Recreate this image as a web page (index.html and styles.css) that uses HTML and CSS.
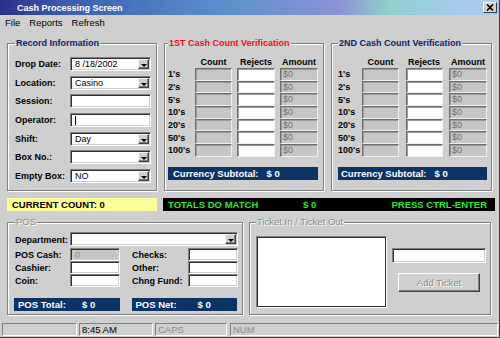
FILE: index.html
```html
<!DOCTYPE html>
<html lang="en">
<head>
    <meta charset="UTF-8">
    <title>Cash Processing Screen</title>
    <link rel="stylesheet" href="styles.css">
</head>
<body>
    <div class="window">
        <div class="titlebar">
            <span class="title">Cash Processing Screen</span>
            <span class="close-btn">
                <svg width="8" height="7" viewBox="0 0 8 7"><path d="M1 0.5 L7 6.5 M7 0.5 L1 6.5" stroke="#000" stroke-width="1.6"/></svg>
            </span>
        </div>

        <div class="menubar">
            <span>File</span>
            <span>Reports</span>
            <span>Refresh</span>
        </div>

        <div class="top-row">
            <fieldset class="group record">
                <legend>Record Information</legend>
                <div class="form-grid">
                    <label>Drop Date:</label>
                    <div class="field combo"><span>8 /18/2002</span><i class="drop"></i></div>
                    <label>Location:</label>
                    <div class="field combo"><span>Casino</span><i class="drop"></i></div>
                    <label>Session:</label>
                    <div class="field"></div>
                    <label>Operator:</label>
                    <div class="field"><i class="caret"></i></div>
                    <label>Shift:</label>
                    <div class="field combo"><span>Day</span><i class="drop"></i></div>
                    <label>Box No.:</label>
                    <div class="field combo"><span></span><i class="drop"></i></div>
                    <label>Empty Box:</label>
                    <div class="field combo"><span>NO</span><i class="drop"></i></div>
                </div>
            </fieldset>

            <fieldset class="group count first">
                <legend class="red">1ST Cash Count Verification</legend>
                <div class="count-grid">
                    <span></span><span class="head">Count</span><span class="head">Rejects</span><span class="head">Amount</span>
                    <span class="denom">1's</span><span class="cell"></span><span class="cell white"></span><span class="cell">$0</span>
                    <span class="denom">2's</span><span class="cell"></span><span class="cell white"></span><span class="cell">$0</span>
                    <span class="denom">5's</span><span class="cell"></span><span class="cell white"></span><span class="cell">$0</span>
                    <span class="denom">10's</span><span class="cell"></span><span class="cell white"></span><span class="cell">$0</span>
                    <span class="denom">20's</span><span class="cell"></span><span class="cell white"></span><span class="cell">$0</span>
                    <span class="denom">50's</span><span class="cell"></span><span class="cell white"></span><span class="cell">$0</span>
                    <span class="denom">100's</span><span class="cell"></span><span class="cell white"></span><span class="cell">$0</span>
                </div>
                <div class="navy-bar subtotal">Currency Subtotal: <span class="amt">$ 0</span></div>
            </fieldset>

            <fieldset class="group count second">
                <legend>2ND Cash Count Verification</legend>
                <div class="count-grid">
                    <span></span><span class="head">Count</span><span class="head">Rejects</span><span class="head">Amount</span>
                    <span class="denom">1's</span><span class="cell"></span><span class="cell white"></span><span class="cell">$0</span>
                    <span class="denom">2's</span><span class="cell"></span><span class="cell white"></span><span class="cell">$0</span>
                    <span class="denom">5's</span><span class="cell"></span><span class="cell white"></span><span class="cell">$0</span>
                    <span class="denom">10's</span><span class="cell"></span><span class="cell white"></span><span class="cell">$0</span>
                    <span class="denom">20's</span><span class="cell"></span><span class="cell white"></span><span class="cell">$0</span>
                    <span class="denom">50's</span><span class="cell"></span><span class="cell white"></span><span class="cell">$0</span>
                    <span class="denom">100's</span><span class="cell"></span><span class="cell white"></span><span class="cell">$0</span>
                </div>
                <div class="navy-bar subtotal">Currency Subtotal: <span class="amt">$ 0</span></div>
            </fieldset>
        </div>

        <div class="status-row">
            <div class="current-count">CURRENT COUNT: 0</div>
            <div class="totals">
                <span class="totals-msg">TOTALS DO MATCH</span>
                <span>$ 0</span>
                <span class="hint">PRESS CTRL-ENTER</span>
            </div>
        </div>

        <div class="bottom-row">
            <fieldset class="group pos">
                <legend class="disabled">POS</legend>
                <div class="pos-grid">
                    <label>Department:</label>
                    <div class="field combo dept"><span></span><i class="drop"></i></div>
                    <label>POS Cash:</label>
                    <div class="field gray"><span class="dim">0</span></div>
                    <label class="right-label">Checks:</label>
                    <div class="field"></div>
                    <label>Cashier:</label>
                    <div class="field"></div>
                    <label class="right-label">Other:</label>
                    <div class="field"></div>
                    <label>Coin:</label>
                    <div class="field"></div>
                    <label class="right-label">Chng Fund:</label>
                    <div class="field"></div>
                </div>
                <div class="pos-totals">
                    <div class="navy-bar pos-bar"><span class="pos-label">POS Total:</span><span>$ 0</span></div>
                    <div class="navy-bar pos-bar"><span class="pos-label">POS Net:</span><span>$ 0</span></div>
                </div>
            </fieldset>

            <fieldset class="group ticket">
                <legend class="disabled">Ticket In / Ticket Out</legend>
                <div class="ticket-body">
                    <div class="listbox"></div>
                    <div class="ticket-side">
                        <div class="field ticket-input"></div>
                        <div class="btn">Add Ticket</div>
                    </div>
                </div>
            </fieldset>
        </div>

        <div class="statusbar">
            <div class="panel p1"></div>
            <div class="panel p2">8:45 AM</div>
            <div class="panel p3 dim">CAPS</div>
            <div class="panel p4 dim">NUM</div>
        </div>
    </div>
</body>
</html>
```

FILE: styles.css
```css
* {
    margin: 0;
    padding: 0;
    box-sizing: border-box;
}

body {
    background-color: #cfcfcf;
    font-family: "Liberation Sans", Arial, sans-serif;
    font-size: 9px;
    color: #000;
}

.window {
    width: 500px;
    height: 338px;
    display: flex;
    flex-direction: column;
    border-right: 1px solid #404040;
    border-bottom: 1px solid #404040;
}

/* Title bar */
.titlebar {
    height: 15px;
    display: flex;
    align-items: center;
    padding: 0 2px 0 17px;
    color: #fff;
    font-weight: bold;
    background: linear-gradient(90deg, #2a2f8c 0%, #3e5fb0 14%, #5a90cc 45%, #8b93d6 68%, #8fd0cc 78%, #a6caf0 92%);
}

.close-btn {
    margin-left: auto;
    width: 14px;
    height: 11px;
    display: flex;
    align-items: center;
    justify-content: center;
    background-color: #cfcfcf;
    border: 1px solid;
    border-color: #fff #404040 #404040 #fff;
}

/* Menu */
.menubar {
    height: 15px;
    display: flex;
    align-items: center;
    gap: 9px;
    padding-left: 5px;
    font-size: 9.5px;
}

/* Group boxes */
.group {
    border: 1px solid #808080;
    box-shadow: inset 1px 1px 0 #fff, 1px 1px 0 #fff;
    min-width: 0;
}

.group legend {
    margin-left: 0;
    padding: 0 1px;
    line-height: 12px;
    font-weight: bold;
    color: #0a246a;
    background-color: #cfcfcf;
}

.group legend.red {
    color: #e8101c;
}

.group legend.disabled {
    color: #8c8c8c;
    font-weight: normal;
    font-size: 9.5px;
    text-shadow: 1px 1px 0 #fff;
}

.top-row {
    display: flex;
    gap: 7px;
    padding-left: 7px;
    margin-top: 7px;
    height: 154px;
}

.record {
    width: 150px;
    padding: 8px 5px 0 7px;
}

.count.first {
    width: 160px;
    padding: 7px 0 0 3px;
}

.count.second {
    width: 161px;
    padding: 7px 0 0 6px;
}

.form-grid {
    display: grid;
    grid-template-columns: 55px 81px;
    grid-auto-rows: 14px;
    row-gap: 4.7px;
}

label {
    font-weight: bold;
    align-self: center;
}

/* Inputs */
.field {
    display: flex;
    align-items: center;
    background-color: #fff;
    border: 1px solid;
    border-color: #808080 #fff #fff #808080;
    box-shadow: inset 1px 1px 0 #303030, inset -1px -1px 0 #cfcfcf;
    padding: 1px 1px 1px 4px;
    overflow: hidden;
}

.field.gray {
    background-color: #c6c6c6;
}

.dim {
    color: #8c8c8c;
}

.caret {
    width: 1px;
    height: 9px;
    background-color: #000;
}

.drop {
    margin-left: auto;
    width: 11px;
    height: 100%;
    background-color: #cfcfcf;
    border: 1px solid;
    border-color: #f4f4f4 #404040 #404040 #f4f4f4;
    box-shadow: inset -1px -1px 0 #808080;
    position: relative;
}

.drop::after {
    content: "";
    position: absolute;
    left: 2px;
    top: 4px;
    border-left: 3px solid transparent;
    border-right: 3px solid transparent;
    border-top: 3px solid #000;
}

/* Count grids */
.count-grid {
    display: grid;
    grid-template-rows: 12px repeat(7, 12.7px);
}

.first .count-grid {
    grid-template-columns: 22px 37px 38px 38px;
    column-gap: 5px;
}

.second .count-grid {
    grid-template-columns: 17.5px 37px 37px 38px;
    column-gap: 6.5px;
}

.head {
    font-weight: bold;
    text-align: center;
    align-self: center;
}

.denom {
    font-weight: bold;
    align-self: center;
    white-space: nowrap;
}

.cell {
    background-color: #c6c6c6;
    border: 1px solid;
    border-color: #6e6e6e #f0f0f0 #f0f0f0 #6e6e6e;
    box-shadow: inset 1px 1px 0 #9a9a9a;
    padding-left: 2px;
    line-height: 10px;
    color: #707070;
}

.cell.white {
    background-color: #fff;
}

.navy-bar {
    height: 13px;
    display: flex;
    align-items: center;
    background-color: #0c3366;
    color: #fff;
    font-weight: bold;
    font-size: 9.5px;
}

.subtotal {
    margin-top: 10px;
    padding-left: 5px;
}

.second .subtotal {
    padding-left: 3px;
    width: 149px;
}

.subtotal .amt {
    margin-left: 8px;
}

.first .subtotal {
    width: 150px;
}

/* Middle status row */
.status-row {
    display: flex;
    gap: 6px;
    padding-left: 7px;
    margin-top: 7px;
    height: 13px;
    font-weight: bold;
    font-size: 9.5px;
}

.current-count {
    width: 150px;
    background-color: #ffff99;
    padding-left: 5px;
    display: flex;
    align-items: center;
}

.totals {
    width: 332px;
    background-color: #000;
    color: #33e633;
    display: flex;
    align-items: center;
    padding: 0 8px 0 5px;
}

.totals-msg {
    width: 135px;
}

.hint {
    margin-left: auto;
}

/* Bottom row */
.bottom-row {
    display: flex;
    gap: 6px;
    padding-left: 7px;
    margin-top: 5px;
    height: 99px;
}

.pos {
    width: 236px;
    padding: 4px 5px 0 7px;
}

.pos-grid {
    display: grid;
    grid-template-columns: 55px 50px 68px 50px;
    grid-template-rows: 16px 13px 13px 13px;
}

.dept {
    grid-column: span 3;
    height: 14px;
    align-self: start;
}

.right-label {
    padding-left: 12px;
}

.pos-totals {
    display: flex;
    gap: 12px;
    margin: 11px 0 0 -1px;
}

.pos-bar {
    width: 106px;
    padding-left: 4px;
}

.pos-label {
    width: 64px;
}

.pos-bar + .pos-bar .pos-label {
    width: 62px;
}

.ticket {
    width: 242px;
    padding: 8px 0 0 6px;
}

.ticket-body {
    display: flex;
}

.listbox {
    width: 131px;
    height: 72px;
    background-color: #fff;
    border: 1px solid;
    border-color: #808080 #fff #fff #808080;
    box-shadow: inset 1px 1px 0 #303030, inset -1px -1px 0 #303030;
}

.ticket-side {
    width: 94px;
    margin-left: 5px;
    display: flex;
    flex-direction: column;
    align-items: center;
}

.ticket-input {
    width: 94px;
    height: 15px;
    margin-top: 12px;
}

.btn {
    width: 82px;
    height: 19px;
    margin-top: 10px;
    display: flex;
    align-items: center;
    justify-content: center;
    font-size: 9.5px;
    color: #8c8c8c;
    text-shadow: 1px 1px 0 #fff;
    border: 1px solid;
    border-color: #fff #404040 #404040 #fff;
    box-shadow: inset -1px -1px 0 #808080;
}

/* Status bar */
.statusbar {
    margin-top: auto;
    height: 14px;
    display: flex;
    gap: 2px;
    padding: 0 1px 1px 2px;
    font-size: 9.5px;
}

.panel {
    border: 1px solid;
    border-color: #808080 #fff #fff #808080;
    padding-left: 2px;
    line-height: 11px;
}

.p1 { width: 75px; }
.p2 { width: 74px; }
.p3 { width: 72px; }
.p4 { flex: 1; margin-left: 1px; }
```
